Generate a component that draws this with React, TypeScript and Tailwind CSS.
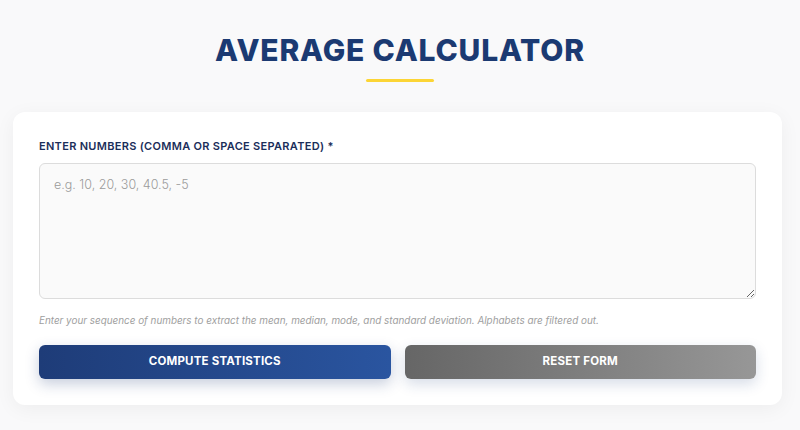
export default function App() {
  return (
    <div className="min-h-[430px] bg-[#f9f9fa] px-[13px] pt-[31px] font-['Inter','Noto_Sans',sans-serif]">
      <div className="flex flex-col items-center">
        <h1 className="text-[30px] font-extrabold leading-[38px] tracking-[0.8px] text-[#1b3a72]">AVERAGE CALCULATOR</h1>
        <div className="mt-[10px] h-[3px] w-[68px] rounded-full bg-[#fcd535]" />
      </div>
      <div className="mt-[30px] w-[769px] rounded-[12px] bg-white p-[26px] shadow-[0_4px_20px_rgba(0,0,0,0.05)]">
        <label className="block text-[11px] font-semibold leading-[16px] tracking-[0.3px] text-[#1b2e5a]">
          ENTER NUMBERS (COMMA OR SPACE SEPARATED) *
        </label>
        <textarea
          className="mt-[9px] block h-[136px] w-full resize-y rounded-[6px] border border-[#dcdcdc] bg-[#fafafa] px-[14px] py-[12px] text-[12.5px] font-light text-[#333] outline-none placeholder:text-[#9a9a9a]"
          placeholder="e.g. 10, 20, 30, 40.5, -5"
        />
        <p className="mt-[14px] text-[9.9px] italic leading-[14px] text-[#9e9e9e]">
          Enter your sequence of numbers to extract the mean, median, mode, and standard deviation. Alphabets are filtered out.
        </p>
        <div className="mt-[18px] grid grid-cols-2 gap-[14px]">
          <button className="h-[34px] rounded-[6px] bg-gradient-to-r from-[#1e3c78] to-[#2a55a0] text-[11.5px] font-bold tracking-[0.2px] text-white shadow-[0_5px_14px_rgba(30,60,120,0.25)]">
            COMPUTE STATISTICS
          </button>
          <button className="h-[34px] rounded-[6px] bg-gradient-to-r from-[#666666] to-[#979797] text-[11.5px] font-bold tracking-[0.2px] text-white shadow-[0_5px_14px_rgba(30,60,120,0.18)]">
            RESET FORM
          </button>
        </div>
      </div>
    </div>
  );
}
